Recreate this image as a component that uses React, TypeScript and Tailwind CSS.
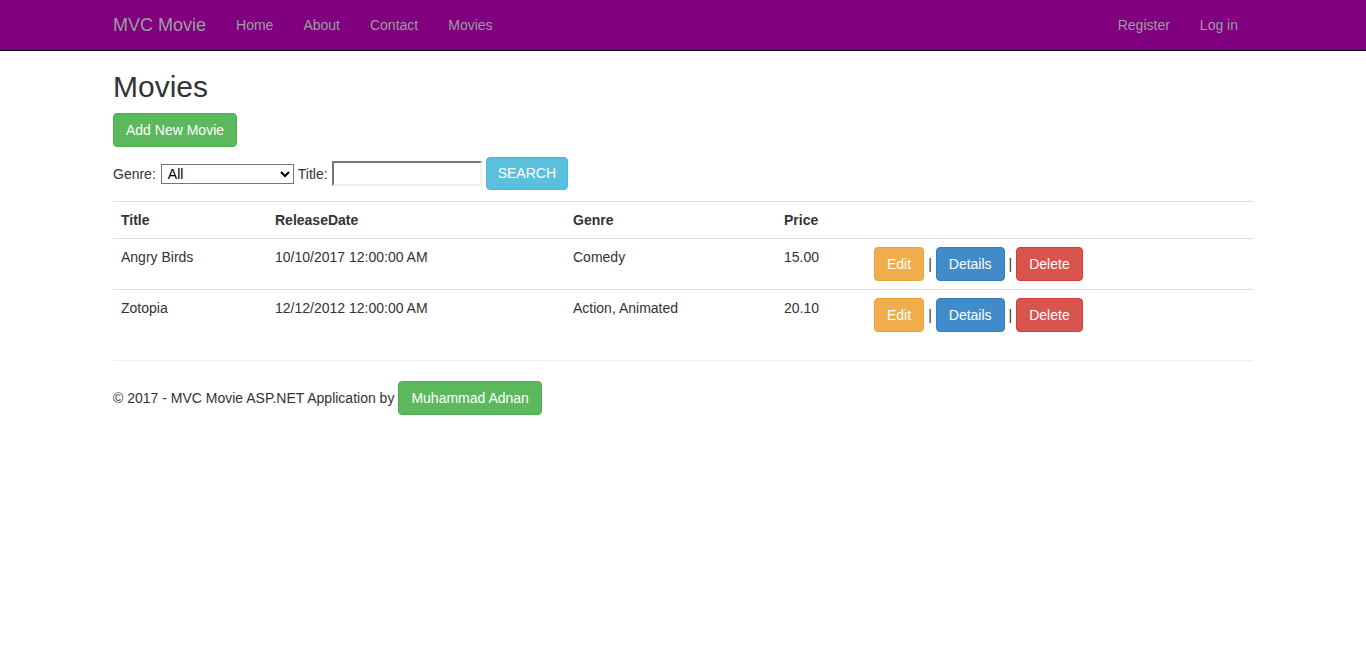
import React from "react";

const movies = [
  { title: "Angry Birds", date: "10/10/2017 12:00:00 AM", genre: "Comedy", price: "15.00" },
  { title: "Zotopia", date: "12/12/2012 12:00:00 AM", genre: "Action, Animated", price: "20.10" },
];

const btn = "inline-block h-[34px] px-3 leading-[32px] rounded border text-[14px] text-white";

export default function App() {
  return (
    <div className="min-h-[666px] bg-white text-[14px] leading-[20px] text-[#333] font-['Liberation_Sans',Arial,sans-serif]">
      {/* navbar */}
      <div className="h-[51px] bg-[#800080] border-b border-black">
        <div className="w-[1170px] mx-auto px-[15px] flex h-[50px] items-center">
          <span className="text-[18px] text-[#9d9d9d] mr-[15px]">MVC Movie</span>
          <div className="flex text-[#9d9d9d]">
            <span className="px-[15px]">Home</span>
            <span className="px-[15px]">About</span>
            <span className="px-[15px]">Contact</span>
            <span className="px-[15px]">Movies</span>
          </div>
          <div className="flex ml-auto text-[#9d9d9d]">
            <span className="px-[15px]">Register</span>
            <span className="px-[15px]">Log in</span>
          </div>
        </div>
      </div>

      <div className="w-[1170px] mx-auto px-[15px]">
        <h2 className="mt-[19px] mb-[10px] text-[30px] leading-[33px]">Movies</h2>
        <p className="mb-[10px]">
          <span className={btn + " bg-[#5cb85c] border-[#4cae4c]"}>Add New Movie</span>
        </p>
        <div className="flex items-center h-[33px] mb-[11px]">
          <span>Genre:</span>
          <select className="ml-[5px] w-[133px] h-[20px] border border-[#767676] text-[14px] leading-[18px] text-black px-[2px] bg-white">
            <option>All</option>
          </select>
          <span className="ml-1">Title:</span>
          <input className="ml-1 w-[150px] h-[25px] border-2 border-t-[#767676] border-l-[#767676] border-r-[#f0f0f0] border-b-[#f0f0f0] bg-white" />
          <span className="ml-1 inline-block h-[33px] px-[11px] leading-[31px] rounded border bg-[#5bc0de] border-[#46b8da] text-white">SEARCH</span>
        </div>

        <table className="w-full border-collapse">
          <thead>
            <tr className="border-t border-b border-[#ddd]">
              <th className="w-[154px] text-left p-2 font-bold">Title</th>
              <th className="w-[298px] text-left p-2 font-bold">ReleaseDate</th>
              <th className="w-[211px] text-left p-2 font-bold">Genre</th>
              <th className="w-[90px] text-left p-2 font-bold">Price</th>
              <th className="p-2"></th>
            </tr>
          </thead>
          <tbody>
            {movies.map((m) => (
              <tr key={m.title} className="border-t border-[#ddd] first:border-t-0">
                <td className="p-2 align-top">{m.title}</td>
                <td className="p-2 align-top">{m.date}</td>
                <td className="p-2 align-top">{m.genre}</td>
                <td className="p-2 align-top">{m.price}</td>
                <td className="p-2 align-top">
                  <div className="flex items-center gap-[4px]">
                    <span className={btn + " bg-[#f0ad4e] border-[#eea236]"}>Edit</span>
                    <span>|</span>
                    <span className={btn + " bg-[#428bca] border-[#357ebd]"}>Details</span>
                    <span>|</span>
                    <span className={btn + " bg-[#d9534f] border-[#d43f3a]"}>Delete</span>
                  </div>
                </td>
              </tr>
            ))}
          </tbody>
        </table>

        <hr className="mt-[20px] mb-[20px] border-t border-[#eee]" />
        <footer className="flex items-center">
          <span>© 2017 - MVC Movie ASP.NET Application by</span>
          <span className={btn + " ml-1 bg-[#5cb85c] border-[#4cae4c]"}>Muhammad Adnan</span>
        </footer>
      </div>
    </div>
  );
}
